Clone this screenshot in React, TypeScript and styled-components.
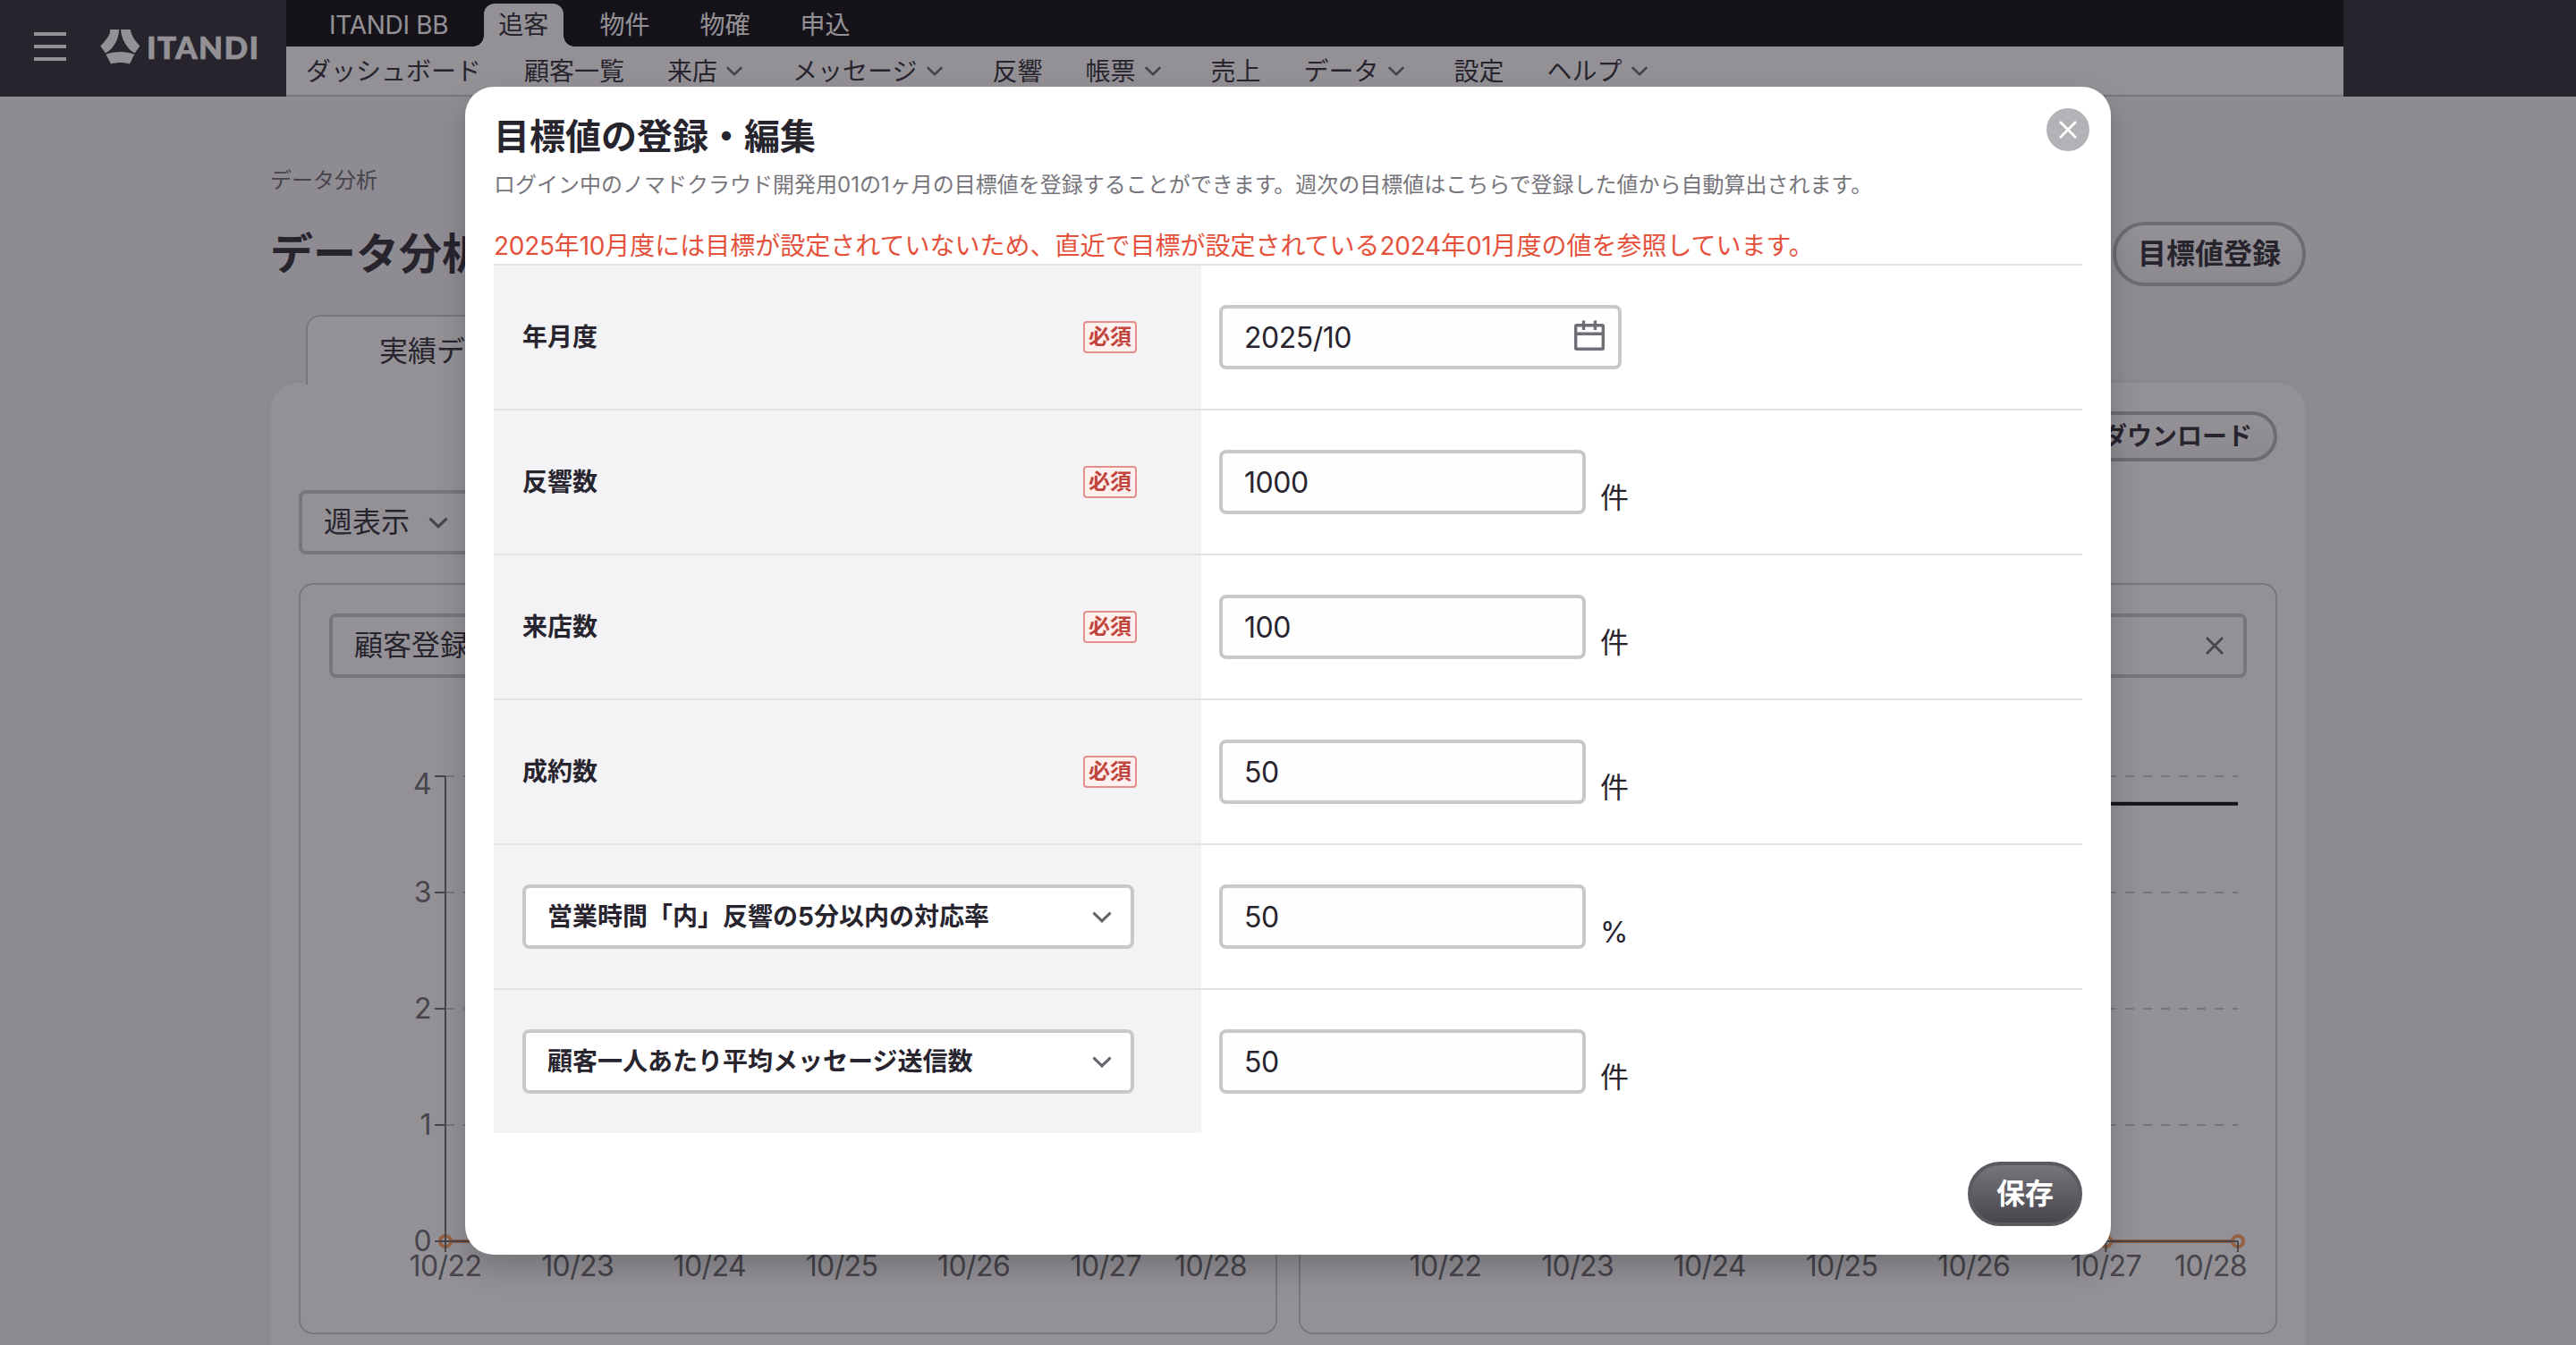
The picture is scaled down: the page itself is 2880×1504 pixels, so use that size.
import React from "react";
import styled, { createGlobalStyle, css } from "styled-components";

const color = {
  ink: "#27242e",
  sub: "#77757c",
  line: "#e3e3e4",
  field: "#c8c8ca",
  head: "#f3f3f6",
  page: "#f5f3f6",
  danger: "#e5503a",
  orange: "#ff9c56",
};

const Global = createGlobalStyle`
  * { box-sizing: border-box; }
  html, body { margin: 0; padding: 0; }
  body {
    width: 2880px;
    height: 1504px;
    overflow: hidden;
    background: ${color.page};
    color: ${color.ink};
    font-family: Inter, "Noto Sans CJK JP", sans-serif;
    font-size: 28px;
    line-height: 40px;
  }
  h1, h2, p { margin: 0; }
  button, input { font-family: inherit; color: inherit; }
`;

const Screen = styled.div`
  position: relative;
  width: 2880px;
  height: 1504px;
  overflow: hidden;
`;

/* ---------- header ---------- */

const Header = styled.header`
  display: flex;
  height: 108px;
  background: ${color.ink};
`;

const Brand = styled.div`
  display: flex;
  align-items: center;
  width: 320px;
  height: 104px;
  padding-left: 38px;
`;

const Burger = styled.div`
  display: grid;
  gap: 10px;
  width: 36px;
  margin-right: 38px;
  span { height: 4px; background: #fff; }
`;

const Wordmark = styled.span`
  margin-left: 7px;
  font-family: Lato, sans-serif;
  font-weight: 900;
  font-size: 35px;
  line-height: 40px;
  letter-spacing: 1.4px;
  color: #fff;
  -webkit-text-stroke: 0.7px #fff;
`;

const Navs = styled.div`
  width: 2300px;
`;

const TopNav = styled.nav`
  display: flex;
  align-items: flex-end;
  gap: 24px;
  height: 52px;
  padding-left: 32px;
  background: #020104;
`;

const TopTab = styled.span<{ $active?: boolean }>`
  position: relative;
  height: 48px;
  padding: 0 16px;
  line-height: 48px;
  color: #fff;
  white-space: nowrap;
  ${(p) =>
    p.$active &&
    css`
      padding: 0 17px 0 16px;
      color: ${color.ink};
      background: #fff;
      border-radius: 12px 12px 0 0;
      &::before,
      &::after {
        content: "";
        position: absolute;
        bottom: 0;
        width: 12px;
        height: 12px;
      }
      &::before {
        left: -12px;
        background: radial-gradient(circle at 0 0, transparent 11.5px, #fff 12px);
      }
      &::after {
        right: -12px;
        background: radial-gradient(circle at 100% 0, transparent 11.5px, #fff 12px);
      }
    `}
`;

const SubNav = styled.nav`
  display: flex;
  align-items: center;
  gap: 48px;
  height: 56px;
  padding: 2px 0 0 22px;
  background: #fff;
  border-bottom: 2px solid ${color.field};
`;

const SubItem = styled.span`
  display: flex;
  align-items: center;
  gap: 7px;
  white-space: nowrap;
  svg { margin: 0 5px 2px 0; }
`;

/* ---------- page ---------- */

const Page = styled.main`
  width: 2276px;
  margin: 0 auto;
  padding-top: 74px;
`;

const Breadcrumb = styled.p`
  font-size: 24px;
  line-height: 40px;
  color: #66646b;
`;

const TitleRow = styled.div`
  display: flex;
  justify-content: space-between;
  align-items: center;
  height: 72px;
  margin-top: 26px;
`;

const PageTitle = styled.h1`
  font-size: 48px;
  line-height: 64px;
  font-weight: 700;
`;

const PillButton = styled.button<{ $small?: boolean; $dark?: boolean }>`
  height: ${(p) => (p.$small ? 56 : 72)}px;
  padding: 0 24px;
  border: 4px solid ${(p) => (p.$dark ? "#5c5961" : "#b4b2b7")};
  border-radius: 36px;
  background: ${(p) =>
    p.$dark ? "linear-gradient(#77757b, #48454d)" : "linear-gradient(#fff, #f1f1f2)"};
  background-clip: padding-box;
  background-origin: padding-box;
  color: ${(p) => (p.$dark ? "#fff" : color.ink)};
  font-size: ${(p) => (p.$small ? 28 : 32)}px;
  line-height: 40px;
  font-weight: 700;
  white-space: nowrap;
`;

const DarkPill = styled(PillButton)`
  width: 128px;
  background-color: #5c5961;
  background-clip: border-box;
`;

const TabStrip = styled.div`
  display: flex;
  height: 78px;
  margin-top: 32px;
  padding-left: 40px;
`;

const PanelTab = styled.div`
  height: 78px;
  padding: 0 80px;
  border: 2px solid ${color.field};
  border-bottom: 0;
  border-radius: 16px 16px 0 0;
  background: #fff;
  font-size: 32px;
  line-height: 77px;
`;

const Panel = styled.section`
  height: 1200px;
  margin-top: -2px;
  padding: 32px;
  border-radius: 32px;
  background: #fff;
  box-shadow: 0 0 8px rgba(40, 60, 70, 0.09);
`;

const PanelActions = styled.div`
  display: flex;
  justify-content: flex-end;
`;

const SelectBox = styled.div<{ $w?: number; $bold?: boolean }>`
  display: flex;
  align-items: center;
  justify-content: space-between;
  width: ${(p) => (p.$w ? `${p.$w}px` : "100%")};
  height: 72px;
  padding: 0 ${(p) => (p.$bold ? 18 : 22)}px 0 24px;
  border: 4px solid ${color.field};
  border-radius: 8px;
  background: #fff;
  font-size: ${(p) => (p.$bold ? 28 : 32)}px;
  font-weight: ${(p) => (p.$bold ? 700 : 400)};
  white-space: nowrap;
`;

const ViewSelect = styled(SelectBox)`
  justify-content: flex-start;
  gap: 18px;
  margin: 32px 0;
`;

const Cards = styled.div`
  display: grid;
  grid-template-columns: 1fr 1fr;
  gap: 24px;
`;

const Card = styled.div`
  height: 840px;
  padding: 32px;
  border: 2px solid ${color.field};
  border-radius: 16px;
`;

const ChartSvg = styled.svg`
  display: block;
  overflow: visible;
  text {
    font-size: 32px;
    fill: #666469;
    letter-spacing: -0.6px;
  }
`;

const HelpBubble = styled.div`
  position: absolute;
  left: -36px;
  top: 1186px;
  width: 220px;
  height: 160px;
  border-radius: 80px;
  background: ${color.page};
  box-shadow: 0 8px 40px rgba(0, 0, 0, 0.02);
`;

/* ---------- modal ---------- */

const Overlay = styled.div`
  position: absolute;
  inset: 0;
  display: flex;
  justify-content: center;
  align-items: flex-start;
  padding-top: 97px;
  background: rgba(40, 36, 46, 0.5);
`;

const Modal = styled.div`
  width: 1840px;
  height: 1306px;
  padding: 24px 32px 32px;
  border-radius: 32px;
  background: #fff;
  box-shadow: 0 16px 32px rgba(0, 0, 0, 0.2);
`;

const ModalHead = styled.div`
  display: flex;
  justify-content: space-between;
  align-items: flex-start;
  height: 66px;
`;

const ModalTitle = styled.h2`
  margin-top: 2px;
  font-size: 40px;
  line-height: 60px;
  font-weight: 700;
`;

const CloseButton = styled.button`
  display: grid;
  place-items: center;
  width: 48px;
  height: 48px;
  margin-right: -8px;
  padding: 0;
  border: 0;
  border-radius: 50%;
  background: #b4b2b7;
`;

const Lead = styled.p`
  font-size: 24px;
  line-height: 40px;
  color: ${color.sub};
  white-space: nowrap;
`;

const Warning = styled.p`
  margin: 28px 0 0;
  line-height: 40px;
  color: ${color.danger};
  white-space: nowrap;
`;

const Num = styled.span`
  letter-spacing: -0.01em;
`;

const Row = styled.div`
  display: flex;
  height: 162px;
  border-top: 2px solid ${color.line};
`;

const HeadCell = styled.div`
  display: flex;
  align-items: center;
  justify-content: space-between;
  width: 791px;
  padding: 0 72px 0 32px;
  background: ${color.head};
  font-weight: 700;
`;

const Required = styled.span`
  width: 60px;
  height: 36px;
  border: 2px solid #e38f8a;
  border-radius: 4px;
  background: #fdf0ee;
  color: #c2453d;
  font-size: 24px;
  line-height: 31px;
  text-align: center;
`;

const DataCell = styled.div`
  display: flex;
  align-items: center;
  gap: 16px;
  padding-left: 20px;
`;

const Field = styled.div<{ $w: number }>`
  display: flex;
  align-items: center;
  justify-content: space-between;
  width: ${(p) => p.$w}px;
  height: 72px;
  padding: 2px 15px 0 24px;
  border: 4px solid ${color.field};
  border-radius: 8px;
  background: #fefefe;
  font-size: 32px;
  letter-spacing: -0.5px;
  svg { margin-bottom: 6px; }
`;

const Unit = styled.span`
  height: 72px;
  padding-top: 35px;
  font-size: 32px;
  line-height: 38px;
`;

const Footer = styled.div`
  display: flex;
  justify-content: flex-end;
  margin-top: 32px;
`;

/* ---------- icons ---------- */

const Chevron = ({ size = 24, w = 2.6, c = "#66646b" }) => (
  <svg width={size} height={size} viewBox="0 0 24 24" fill="none" stroke={c} strokeWidth={w}>
    <path d="M3.8 8.2 12 16.2l8.2-8" />
  </svg>
);

const Cross = ({ size = 20, c = "#fff", w = 2.8 }) => (
  <svg width={size} height={size} viewBox="0 0 20 20" fill="none" stroke={c} strokeWidth={w}>
    <path d="M1 1 19 19M19 1 1 19" />
  </svg>
);

const Calendar = () => (
  <svg width="34" height="34" viewBox="0 0 34 34" fill="none" stroke="#706d76" strokeWidth="3.4">
    <rect x="1.7" y="5.7" width="30.6" height="26.6" rx="1" />
    <path d="M1.7 15.3h30.6M10.5 .5v10.5M23.4 .5v10.5" />
  </svg>
);

const Logo = () => (
  <svg width="45" height="39" viewBox="0 0 45 39" fill="#fff">
    <path d="M11 0H21.2C20.6 11 15.5 21 6 26.6L0.3 18.6C4.5 14 9.6 8.4 11 3.6Z" />
    <path d="M23 0H33.8L34.6 3.6C36.4 9.4 40.2 14 44.4 18.4L38.6 26.6C29.4 21 23.8 11 23 0Z" />
    <path d="M6.4 27.8C16 24.2 28.6 24.2 38.2 27.8L33 38.4C26.6 36.4 18.4 36.4 12 38.4Z" />
  </svg>
);

/* ---------- chart ---------- */

const days = ["10/22", "10/23", "10/24", "10/25", "10/26", "10/27", "10/28"];
const X0 = 130;
const X1 = 1016;
const Y0 = 630;
const STEP = 130;

const Chart = ({ target }: { target?: boolean }) => {
  const x = (i: number) => X0 + ((X1 - X0) * i) / 6;
  return (
    <ChartSvg width="1026" height="700" viewBox="0 0 1026 700">
      {[1, 2, 3, 4].map((v) => (
        <line key={v} x1={X0} x2={X1} y1={Y0 - v * STEP} y2={Y0 - v * STEP} stroke="#c8c8ca" strokeWidth="2" strokeDasharray="10 10" />
      ))}
      {target && <line x1={X0} x2={X1} y1={140.7} y2={140.7} stroke="#020104" strokeWidth="4" />}
      <line x1={X0} x2={X1} y1={Y0} y2={Y0} stroke={color.orange} strokeWidth="4" />
      {days.map((d, i) => (
        <circle key={d} cx={x(i)} cy={Y0} r="6" fill="#fff" stroke={color.orange} strokeWidth="4" />
      ))}
      <g stroke="#666469" strokeWidth="2">
        <line x1={X0} x2={X0} y1={Y0 - 4 * STEP} y2={Y0 + 12} />
        <line x1={X0} x2={X1} y1={Y0} y2={Y0} />
        {days.map((d, i) => (
          <line key={d} x1={x(i)} x2={x(i)} y1={Y0} y2={Y0 + 12} />
        ))}
        {[0, 1, 2, 3, 4].map((v) => (
          <line key={v} x1={X0 - 12} x2={X0} y1={Y0 - v * STEP} y2={Y0 - v * STEP} />
        ))}
      </g>
      {[0, 1, 2, 3, 4].map((v) => (
        <text key={v} x={X0 - 16} y={Y0 - v * STEP + (v === 4 ? 20 : 11)} textAnchor="end">
          {v}
        </text>
      ))}
      {days.map((d, i) => (
        <text key={d} x={i === 6 ? X1 - 30.5 : x(i)} y={669} textAnchor="middle">
          {d}
        </text>
      ))}
    </ChartSvg>
  );
};

/* ---------- data ---------- */

const subItems: [string, boolean][] = [
  ["ダッシュボード", false],
  ["顧客一覧", false],
  ["来店", true],
  ["メッセージ", true],
  ["反響", false],
  ["帳票", true],
  ["売上", false],
  ["データ", true],
  ["設定", false],
  ["ヘルプ", true],
];

const goals = [
  { label: "反響数", value: "1000", unit: "件" },
  { label: "来店数", value: "100", unit: "件" },
  { label: "成約数", value: "50", unit: "件" },
  { label: "営業時間「内」反響の5分以内の対応率", value: "50", unit: "%", select: true },
  { label: "顧客一人あたり平均メッセージ送信数", value: "50", unit: "件", select: true },
];

export default function App() {
  return (
    <>
      <Global />
      <Screen>
        <Header>
          <Brand>
            <Burger>
              <span />
              <span />
              <span />
            </Burger>
            <Logo />
            <Wordmark>ITANDI</Wordmark>
          </Brand>
          <Navs>
            <TopNav>
              <TopTab>
                <Num>ITANDI BB</Num>
              </TopTab>
              <TopTab $active>追客</TopTab>
              <TopTab>物件</TopTab>
              <TopTab>物確</TopTab>
              <TopTab>申込</TopTab>
            </TopNav>
            <SubNav>
              {subItems.map(([label, menu]) => (
                <SubItem key={label}>
                  {label}
                  {menu && <Chevron />}
                </SubItem>
              ))}
            </SubNav>
          </Navs>
        </Header>

        <Page>
          <Breadcrumb>データ分析</Breadcrumb>
          <TitleRow>
            <PageTitle>データ分析</PageTitle>
            <PillButton>目標値登録</PillButton>
          </TitleRow>
          <TabStrip>
            <PanelTab>実績データ</PanelTab>
          </TabStrip>
          <Panel>
            <PanelActions>
              <PillButton $small>CSVダウンロード</PillButton>
            </PanelActions>
            <ViewSelect $w={240}>
              週表示
              <Chevron size={28} />
            </ViewSelect>
            <Cards>
              <Card>
                <SelectBox>
                  顧客登録数
                  <Cross c="#66646b" />
                </SelectBox>
                <Chart />
              </Card>
              <Card>
                <SelectBox>
                  来店数
                  <Cross c="#66646b" />
                </SelectBox>
                <Chart target />
              </Card>
            </Cards>
          </Panel>
        </Page>
        <HelpBubble />

        <Overlay>
          <Modal>
            <ModalHead>
              <ModalTitle>目標値の登録・編集</ModalTitle>
              <CloseButton aria-label="閉じる">
                <Cross />
              </CloseButton>
            </ModalHead>
            <Lead>
              ログイン中のノマドクラウド開発用01の1ヶ月の目標値を登録することができます。週次の目標値はこちらで登録した値から自動算出されます。
            </Lead>
            <Warning>
              <Num>2025</Num>年<Num>10</Num>月度には目標が設定されていないため、直近で目標が設定されている
              <Num>2024</Num>年<Num>01</Num>月度の値を参照しています。
            </Warning>
            <Row>
              <HeadCell>
                年月度
                <Required>必須</Required>
              </HeadCell>
              <DataCell>
                <Field $w={450}>
                  2025/10
                  <Calendar />
                </Field>
              </DataCell>
            </Row>
            {goals.map((g) => (
              <Row key={g.label}>
                <HeadCell>
                  {g.select ? (
                    <SelectBox $w={684} $bold>
                      {g.label}
                      <Chevron size={28} />
                    </SelectBox>
                  ) : (
                    <>
                      {g.label}
                      <Required>必須</Required>
                    </>
                  )}
                </HeadCell>
                <DataCell>
                  <Field $w={410}>{g.value}</Field>
                  <Unit>{g.unit}</Unit>
                </DataCell>
              </Row>
            ))}
            <Footer>
              <DarkPill $dark>保存</DarkPill>
            </Footer>
          </Modal>
        </Overlay>
      </Screen>
    </>
  );
}
